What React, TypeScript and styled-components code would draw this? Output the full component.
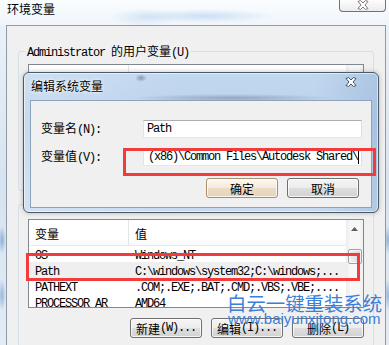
import React from "react";
import styled, { createGlobalStyle } from "styled-components";

const GlobalStyle = createGlobalStyle`
  html, body {
    margin: 0;
    padding: 0;
  }
  body {
    background: #dbe6f1;
    font-family: "Noto Sans CJK SC", sans-serif;
    font-size: 12px;
    color: #000;
  }
  * {
    box-sizing: border-box;
  }
`;

const Screen = styled.div`
  position: relative;
  width: 389px;
  height: 345px;
  overflow: hidden;
  display: flex;
  flex-direction: column;
`;

const TitleBar = styled.div`
  height: 25px;
  flex-shrink: 0;
  display: flex;
  align-items: flex-start;
  background: radial-gradient(
      ellipse 70px 7px at 205px 16px,
      rgba(175, 208, 240, 0.6),
      transparent
    ),
    radial-gradient(
      ellipse 35px 9px at 145px 17px,
      rgba(185, 214, 242, 0.55),
      transparent
    ),
    linear-gradient(#fbfdff, #f0f5fa);
`;

const WindowTitle = styled.div`
  padding: 3px 0 0 7px;
  line-height: 12px;
`;

const CaptionClose = styled.div`
  margin-left: auto;
  margin-right: 3px;
  width: 47px;
  height: 12px;
  border: 1px solid #727272;
  border-top: none;
  border-radius: 0 0 4px 4px;
  background: linear-gradient(#fdfdfd, #ececec);
  display: flex;
  justify-content: center;
  align-items: flex-start;
`;

const Body = styled.div`
  flex: 1;
  display: flex;
  min-height: 0;
`;

const GlassEdge = styled.div<{ $w: number }>`
  width: ${(p) => p.$w}px;
  flex-shrink: 0;
  background: radial-gradient(
      ellipse 4px 14px at 2px 215px,
      rgba(90, 140, 200, 0.6),
      transparent
    ),
    radial-gradient(
      ellipse 4px 16px at 2px 270px,
      rgba(90, 140, 200, 0.55),
      transparent
    ),
    linear-gradient(#eaf1f8, #d6e3f0 50%, #e3ecf5);
`;

const Frame = styled.div`
  flex: 1;
  min-width: 0;
  background: #f0f0f0;
  border: 1px solid #8d9aa7;
  border-bottom: none;
  padding: 19px 11px 0 11px;
  display: flex;
  flex-direction: column;
`;

const Group = styled.fieldset<{ $gap?: number; $top?: number }>`
  margin: ${(p) => p.$gap ?? 0}px 0 0 0;
  padding: ${(p) => p.$top ?? 7}px 9px 8px 9px;
  border: 1px solid #d5dfe5;
  border-radius: 3px;
  min-width: 0;
`;

const GroupLabel = styled.legend`
  padding: 0 2px;
  margin-left: -3px;
  line-height: 12px;
  height: 12px;
`;

const CJK = styled.span`
  font-family: "Noto Sans CJK SC", sans-serif;
  font-size: 12px;
`;

const Latin = styled.span`
  font-family: "Liberation Mono", monospace;
  font-size: 12px;
  letter-spacing: -1.2px;
`;

const Txt = ({ children }: { children: string }) => (
  <>
    {children
      .split(/([\u3400-\u9fff]+)/)
      .filter(Boolean)
      .map((part, i) =>
        /[\u3400-\u9fff]/.test(part) ? (
          <CJK key={i}>{part}</CJK>
        ) : (
          <Latin key={i}>{part}</Latin>
        )
      )}
  </>
);

const ListBox = styled.div<{ $h: number }>`
  height: ${(p) => p.$h}px;
  border: 1px solid #828790;
  background: #fff;
  display: flex;
  overflow: hidden;
`;

const ListMain = styled.div`
  flex: 1;
  min-width: 0;
  display: flex;
  flex-direction: column;
`;

const HeaderRow = styled.div`
  height: 26px;
  flex-shrink: 0;
  display: flex;
  border-bottom: 1px solid #eaeaea;
  background: linear-gradient(#fff, #fff 70%, #f8f9fa);
`;

const HeaderCell = styled.div<{ $first?: boolean }>`
  width: ${(p) => (p.$first ? "100px" : "auto")};
  flex: ${(p) => (p.$first ? "none" : 1)};
  padding: 3px 0 0 6px;
  display: flex;
  align-items: center;
  line-height: 14px;
  border-right: ${(p) => (p.$first ? "1px solid #e5e5e5" : "none")};
`;

const Row = styled.div<{ $active?: boolean }>`
  height: 16px;
  flex-shrink: 0;
  display: flex;
  line-height: 16px;
  background: ${(p) => (p.$active ? "#efefef" : "transparent")};
`;

const Cell = styled.div<{ $first?: boolean }>`
  width: ${(p) => (p.$first ? "100px" : "auto")};
  flex: ${(p) => (p.$first ? "none" : 1)};
  padding-left: 6px;
  white-space: nowrap;
  overflow: hidden;
`;

const ScrollBar = styled.div`
  width: 17px;
  flex-shrink: 0;
  background: linear-gradient(90deg, #ececec, #f7f7f7 25%, #f7f7f7 75%, #efefef);
  display: flex;
  flex-direction: column;
  align-items: center;
`;

const ScrollArrow = styled.div`
  height: 17px;
  width: 100%;
  display: flex;
  align-items: center;
  justify-content: center;
`;

const ScrollThumb = styled.div`
  margin-top: 12px;
  width: 14px;
  height: 15px;
  border: 1px solid #a0a0a0;
  border-radius: 2px;
  background: linear-gradient(90deg, #f3f3f3, #e6e6e6 50%, #d9d9d9);
  box-shadow: inset 0 0 0 1px rgba(255, 255, 255, 0.7);
`;

const ButtonRow = styled.div`
  margin-top: 10px;
  display: flex;
  justify-content: flex-end;
  gap: 9px;
`;

const PushButton = styled.button<{ $default?: boolean }>`
  width: 72px;
  height: 20px;
  padding: 0;
  border: 1px solid ${(p) => (p.$default ? "#a88e6c" : "#707070")};
  border-radius: 3px;
  background: ${(p) =>
    p.$default
      ? "linear-gradient(#fdf8f2, #f4eadc 50%, #ecdcc6 51%, #e6d3ba)"
      : "linear-gradient(#f4f4f4, #ececec 50%, #dedede 51%, #d2d2d2)"};
  box-shadow: inset 0 0 0 1px rgba(255, 255, 255, 0.75);
  display: flex;
  align-items: center;
  justify-content: center;
  line-height: 14px;
  color: #000;
  font: inherit;
`;

const EditDialog = styled.div`
  position: absolute;
  left: 23px;
  top: 72px;
  width: 356px;
  height: 141px;
  border: 1px solid #4b5a6b;
  border-radius: 6px;
  padding: 0 6px 4px 6px;
  display: flex;
  flex-direction: column;
  background: radial-gradient(
      ellipse 100px 4px at 208px 25px,
      rgba(70, 80, 100, 0.35),
      transparent
    ),
    radial-gradient(
      ellipse 6px 4px at 117px 5px,
      rgba(60, 70, 90, 0.45),
      transparent
    ),
    linear-gradient(
      90deg,
      rgba(255, 255, 255, 0.2),
      transparent 45%,
      transparent 82%,
      rgba(80, 120, 170, 0.18)
    ),
    linear-gradient(#c2d8ef, #b9d1eb 35%, #c8dbf0);
  box-shadow: inset 0 0 0 1px rgba(255, 255, 255, 0.55),
    0 0 5px rgba(0, 0, 0, 0.25);
`;

const DialogCaption = styled.div`
  height: 27px;
  flex-shrink: 0;
  display: flex;
  align-items: flex-start;
  padding: 4px 0 0 1px;
`;

const DialogTitle = styled.div`
  margin-top: 3px;
  line-height: 12px;
  text-shadow: 0 0 4px #fff, 0 0 2px #fff;
`;

const DialogClose = styled.div`
  margin-left: auto;
  margin-right: 15px;
  display: flex;
`;

const DialogClient = styled.div`
  flex: 1;
  background: #f0f0f0;
  border: 1px solid #8ea3b9;
  padding: 19px 9px 0 10px;
  display: flex;
  flex-direction: column;
`;

const FieldRow = styled.div<{ $gap?: number }>`
  height: 18px;
  margin-top: ${(p) => p.$gap ?? 0}px;
  display: flex;
  align-items: center;
`;

const FieldLabel = styled.div`
  width: 102px;
  flex-shrink: 0;
  line-height: 14px;
`;

const TextBox = styled.div<{ $end?: boolean }>`
  flex: 1;
  height: 18px;
  min-width: 0;
  border: 1px solid;
  border-color: #abadb3 #dbdfe6 #e3e9ef #e2e3ea;
  background: #fff;
  padding: 0 2px 0 3px;
  display: flex;
  align-items: center;
  justify-content: ${(p) => (p.$end ? "flex-end" : "flex-start")};
  overflow: hidden;
  white-space: nowrap;
  line-height: 16px;
`;

const Caret = styled.span`
  width: 1px;
  height: 13px;
  background: #000;
  flex-shrink: 0;
`;

const DialogButtons = styled.div`
  margin-top: 12px;
  margin-right: 3px;
  display: flex;
  justify-content: flex-end;
  gap: 9px;
`;

const Highlight = styled.div<{ $x: number; $y: number; $w: number; $h: number }>`
  position: absolute;
  left: ${(p) => p.$x}px;
  top: ${(p) => p.$y}px;
  width: ${(p) => p.$w}px;
  height: ${(p) => p.$h}px;
  border: 3px solid #f23b3b;
  pointer-events: none;
`;

const Watermark = styled.div`
  position: absolute;
  left: 227px;
  top: 292px;
  display: flex;
  flex-direction: column;
  color: #3c7fd6;
  pointer-events: none;
`;

const WatermarkTitle = styled.div`
  font-family: "Noto Sans CJK SC", sans-serif;
  font-size: 19.4px;
  line-height: 22px;
  white-space: nowrap;
`;

const WatermarkUrl = styled.div`
  font-family: "Liberation Sans", Arial, sans-serif;
  font-size: 15px;
  line-height: 15px;
  margin: -3px 0 0 1px;
  white-space: nowrap;
`;

const CloseGlyph = ({ fill, stroke }: { fill: string; stroke: string }) => (
  <svg width="12" height="10" viewBox="0 0 12 10">
    <path
      d="M1 1.5 L3.5 0.5 L6 3 L8.5 0.5 L11 1.5 L8 5 L11 8.5 L8.5 9.5 L6 7 L3.5 9.5 L1 8.5 L4 5 Z"
      fill={fill}
      stroke={stroke}
      strokeWidth="0.9"
      strokeLinejoin="round"
    />
  </svg>
);

const UpArrow = () => (
  <svg width="7" height="4" viewBox="0 0 7 4">
    <path d="M0 4 L3.5 0 L7 4 Z" fill="#5f5f5f" />
  </svg>
);

const userVars = [
  ["TEMP", "%USERPROFILE%\\AppData\\Local\\Temp"],
  ["TMP", "%USERPROFILE%\\AppData\\Local\\Temp"],
];

const systemVars = [
  ["OS", "Windows_NT"],
  ["Path", "C:\\windows\\system32;C:\\windows;..."],
  ["PATHEXT", ".COM;.EXE;.BAT;.CMD;.VBS;.VBE;...."],
  ["PROCESSOR_AR", "AMD64"],
];

const VarList = ({
  height,
  rows,
  active,
}: {
  height: number;
  rows: string[][];
  active?: string;
}) => (
  <ListBox $h={height}>
    <ListMain>
      <HeaderRow>
        <HeaderCell $first>
          <Txt>变量</Txt>
        </HeaderCell>
        <HeaderCell>
          <Txt>值</Txt>
        </HeaderCell>
      </HeaderRow>
      {rows.map(([name, value]) => (
        <Row key={name} $active={name === active}>
          <Cell $first>
            <Txt>{name}</Txt>
          </Cell>
          <Cell>
            <Txt>{value}</Txt>
          </Cell>
        </Row>
      ))}
    </ListMain>
    <ScrollBar>
      <ScrollArrow>
        <UpArrow />
      </ScrollArrow>
      <ScrollThumb />
    </ScrollBar>
  </ListBox>
);

export default function App() {
  return (
    <>
      <GlobalStyle />
      <Screen>
        <TitleBar>
          <WindowTitle>环境变量</WindowTitle>
          <CaptionClose>
            <CloseGlyph fill="#fff" stroke="#6a6a6a" />
          </CaptionClose>
        </TitleBar>
        <Body>
          <GlassEdge $w={6} />
          <Frame>
            <Group>
              <GroupLabel>
                <Txt>Administrator 的用户变量(U)</Txt>
              </GroupLabel>
              <VarList height={118} rows={userVars} />
            </Group>
            <Group $gap={7} $top={9}>
              <GroupLabel>
                <Txt>系统变量(S)</Txt>
              </GroupLabel>
              <VarList height={89} rows={systemVars} active="Path" />
              <ButtonRow>
                <PushButton>
                  <Txt>新建(W)...</Txt>
                </PushButton>
                <PushButton>
                  <Txt>编辑(I)...</Txt>
                </PushButton>
                <PushButton>
                  <Txt>删除(L)</Txt>
                </PushButton>
              </ButtonRow>
            </Group>
          </Frame>
          <GlassEdge $w={3} />
        </Body>

        <EditDialog>
          <DialogCaption>
            <DialogTitle>编辑系统变量</DialogTitle>
            <DialogClose>
              <CloseGlyph fill="#fff" stroke="#3a4250" />
            </DialogClose>
          </DialogCaption>
          <DialogClient>
            <FieldRow>
              <FieldLabel>
                <Txt>变量名(N):</Txt>
              </FieldLabel>
              <TextBox>
                <Txt>Path</Txt>
              </TextBox>
            </FieldRow>
            <FieldRow $gap={10}>
              <FieldLabel>
                <Txt>变量值(V):</Txt>
              </FieldLabel>
              <TextBox $end>
                <Txt>{"(x86)\\Common Files\\Autodesk Shared\\"}</Txt>
                <Caret />
              </TextBox>
            </FieldRow>
            <DialogButtons>
              <PushButton $default>
                <Txt>确定</Txt>
              </PushButton>
              <PushButton>
                <Txt>取消</Txt>
              </PushButton>
            </DialogButtons>
          </DialogClient>
        </EditDialog>

        <Highlight $x={123} $y={148} $w={253} $h={28} />
        <Highlight $x={26} $y={253} $w={334} $h={28} />

        <Watermark>
          <WatermarkTitle>白云一键重装系统</WatermarkTitle>
          <WatermarkUrl>www.baiyunxitong.com</WatermarkUrl>
        </Watermark>
      </Screen>
    </>
  );
}
